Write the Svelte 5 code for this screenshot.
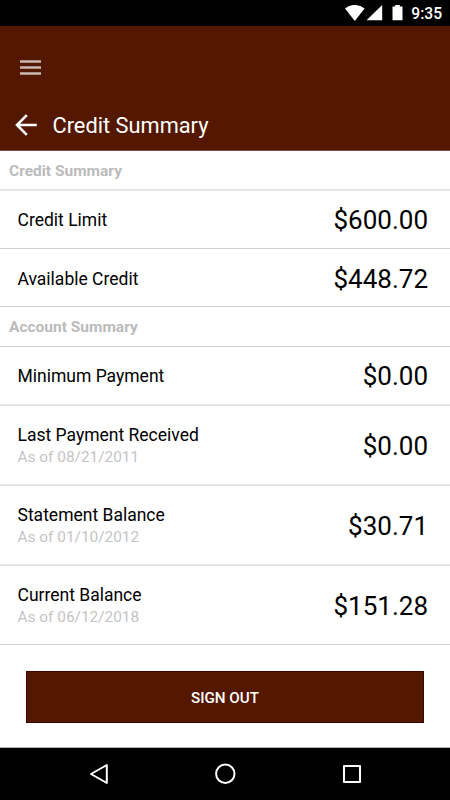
<script lang="ts">
  type Item = { label: string; value: string; date?: string; soft?: boolean; low?: boolean };
  type Section = { title: string; soft?: boolean; items: Item[] };

  const sections: Section[] = [
    {
      title: "Credit Summary",
      soft: true,
      items: [
        { label: "Credit Limit", value: "$600.00" },
        { label: "Available Credit", value: "$448.72", low: true },
      ],
    },
    {
      title: "Account Summary",
      items: [
        { label: "Minimum Payment", value: "$0.00", soft: true },
        { label: "Last Payment Received", value: "$0.00", date: "08/21/2011", soft: true },
        { label: "Statement Balance", value: "$30.71", date: "01/10/2012", soft: true },
        { label: "Current Balance", value: "$151.28", date: "06/12/2018" },
      ],
    },
  ];
</script>

<div class="screen">
  <div class="status-bar">
    <svg class="status-icons" width="60" height="18" viewBox="0 0 60 18" fill="#fff">
      <path d="M1 3.6C7-1.3 14-1.3 20.6 3.6L10.8 16z" />
      <path d="M38.2 0v15.3H22.5z" />
      <path d="M48.5 1.5h2.7V0h4.6v1.5h2.7v13.8h-10z" />
    </svg>
    <span class="clock">9:35</span>
  </div>

  <header class="header">
    <button class="menu" aria-label="Menu">
      <svg width="21" height="15" viewBox="0 0 21 15" fill="#cbb9b3">
        <path d="M0 .2h21v2.5H0zM0 6.3h21v2.4H0zM0 12.3h21v2.5H0z" />
      </svg>
    </button>
    <div class="title-bar">
      <button class="back" aria-label="Back">
        <svg width="22" height="22" viewBox="0 0 22 22" fill="none" stroke="#fff" stroke-width="2.6">
          <path d="M11.8 1.2L2 11l9.8 9.8M2 11h19.8" />
        </svg>
      </button>
      <h1>Credit Summary</h1>
    </div>
  </header>

  <main class="content">
    {#each sections as section}
      <h2 class="section-title" class:soft={section.soft}>{section.title}</h2>
      {#each section.items as item}
        <div class="row" class:dated={item.date} class:soft={item.soft} class:low={item.low}>
          <div class="row-text">
            <div class="label">{item.label}</div>
            {#if item.date}
              <div class="date">As of {item.date}</div>
            {/if}
          </div>
          <div class="value">{item.value}</div>
        </div>
      {/each}
    {/each}
    <div class="actions">
      <button class="sign-out">SIGN OUT</button>
    </div>
  </main>

  <nav class="nav-bar">
    <svg width="450" height="52" viewBox="0 0 450 52" fill="none" stroke="#fff" stroke-width="2" stroke-linejoin="round">
      <path d="M91 26l15.8-9v18z" />
      <circle cx="225.3" cy="25.8" r="9.2" />
      <rect x="344" y="18" width="16" height="16" />
    </svg>
  </nav>
</div>

<style>
  :global(body) {
    background: #fff;
  }
  .screen {
    box-sizing: border-box;
    display: flex;
    flex-direction: column;
    width: 450px;
    height: 800px;
    overflow: hidden;
    background: #fff;
    color: #000;
    font-family: Roboto, sans-serif;
  }
  button {
    padding: 0;
    border: 0;
    background: none;
    font-family: inherit;
    cursor: pointer;
  }
  .status-bar {
    box-sizing: border-box;
    display: flex;
    justify-content: flex-end;
    height: 26px;
    padding: 5px 8px 0 0;
    background: #000;
  }
  .status-icons {
    margin-right: 7px;
  }
  .clock {
    color: #fff;
    font-size: 15.6px;
    font-weight: 500;
    line-height: 18px;
  }
  .header {
    box-sizing: border-box;
    height: 125px;
    padding: 34px 15px 0;
    background: #541800;
    border-bottom: 1px solid #7a4d42;
  }
  .menu {
    display: flex;
    margin-left: 5px;
  }
  .title-bar {
    display: flex;
    align-items: center;
    height: 30px;
    margin-top: 35px;
  }
  .back {
    display: flex;
    width: 22px;
    margin-right: 15.5px;
  }
  h1 {
    margin: 0;
    padding-top: 2px;
    color: #fff;
    font-size: 21.8px;
    font-weight: 400;
    line-height: 30px;
  }
  .content {
    flex: 1;
  }
  .section-title {
    box-sizing: border-box;
    height: 40px;
    margin: 0;
    padding-left: 9px;
    border-bottom: 1px solid #d0d0d0;
    color: #bbb;
    font-size: 15.5px;
    font-weight: 700;
    line-height: 40px;
  }
  .row {
    box-sizing: border-box;
    display: flex;
    align-items: center;
    justify-content: space-between;
    height: 58px;
    padding: 1px 22px 0 17.5px;
    border-bottom: 1px solid #d0d0d0;
  }
  .row.low {
    padding-top: 3px;
  }
  .row.soft {
    height: 59px;
  }
  .row.dated {
    height: 79px;
    padding-top: 2px;
  }
  .row.dated.soft {
    height: 80px;
  }
  .section-title.soft,
  .row.soft {
    border-bottom: 2px solid #e6e6e6;
  }
  .label {
    font-size: 17.5px;
    line-height: 22px;
  }
  .date {
    color: #c4c4c4;
    font-size: 15.4px;
    line-height: 23px;
  }
  .value {
    font-size: 26px;
    line-height: 32px;
  }
  .actions {
    padding: 26px 26px 0;
  }
  .sign-out {
    display: block;
    width: 398px;
    height: 52px;
    padding-top: 1px;
    border: 1px solid #3a0800;
    background: #541800;
    color: #fff;
    font-size: 15.2px;
    font-weight: 500;
  }
  .nav-bar {
    height: 52px;
    border-top: 1px solid #b5b5b5;
    background: #000;
  }
</style>
